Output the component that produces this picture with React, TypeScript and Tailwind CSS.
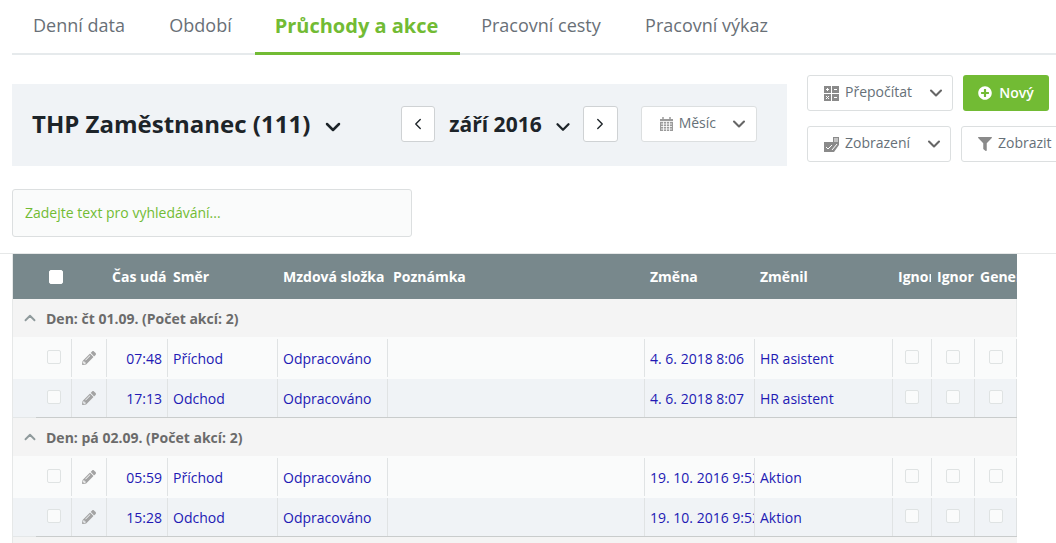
import { ChevronDown, ChevronLeft, ChevronRight, ChevronUp } from 'lucide-react';
import { FaFilter, FaPencilAlt, FaPlusCircle } from 'react-icons/fa';

const tabs = [
  { label: 'Denní data', width: 'w-[134px]' },
  { label: 'Období', width: 'w-[109px]' },
  { label: 'Průchody a akce', width: 'w-[205px] pr-[2px]', active: true },
  { label: 'Pracovní cesty', width: 'w-[162px]' },
  { label: 'Pracovní výkaz', width: 'w-[169px]' },
];

// column widths of the table, left to right
const cols = {
  check: 'w-[58px]',
  edit: 'w-[35px]',
  time: 'w-[61px]',
  dir: 'w-[110px]',
  type: 'w-[110px]',
  note: 'w-[257px]',
  changed: 'w-[110px]',
  by: 'w-[138px]',
  ign1: 'w-[39px]',
  ign2: 'w-[43px]',
  gen: 'w-[43px]',
};

const groups = [
  {
    title: 'Den: čt 01.09. (Počet akcí: 2)',
    rows: [
      { time: '07:48', dir: 'Příchod', changed: '4. 6. 2018 8:06', by: 'HR asistent' },
      { time: '17:13', dir: 'Odchod', changed: '4. 6. 2018 8:07', by: 'HR asistent' },
    ],
  },
  {
    title: 'Den: pá 02.09. (Počet akcí: 2)',
    rows: [
      { time: '05:59', dir: 'Příchod', changed: '19. 10. 2016 9:52', by: 'Aktion' },
      { time: '15:28', dir: 'Odchod', changed: '19. 10. 2016 9:52', by: 'Aktion' },
    ],
  },
];

function CalcIcon() {
  return (
    <svg width="15" height="15" viewBox="0 0 15 15" className="shrink-0 mr-px">
      <rect width="7" height="7" fill="#8a8a8a" />
      <rect x="8" width="7" height="7" fill="#8a8a8a" />
      <rect y="8" width="7" height="7" fill="#8a8a8a" />
      <rect x="8" y="8" width="7" height="7" fill="#8a8a8a" />
      <path d="M2 3.5h3M3.5 2v3M10 3.5h3M2 10l3 3M5 10l-3 3M10 11.5h3" stroke="#fff" strokeWidth="1" />
    </svg>
  );
}

function ViewIcon() {
  return (
    <svg width="16" height="15" viewBox="0 0 16 15" className="shrink-0">
      <path d="M0 5h9V0h6v8l-5 7H0z" fill="#8a8a8a" />
      <path d="M10 2h4M10 4h4M2 10l2 2 4-4M8 13l5-6" stroke="#fff" strokeWidth="1" fill="none" />
    </svg>
  );
}

function CalendarIcon() {
  return (
    <svg width="13" height="14" viewBox="0 0 13 14" className="shrink-0">
      <path d="M0 2h13v12H0z" fill="#9a9a9a" />
      <path d="M3 0v3M10 0v3" stroke="#9a9a9a" strokeWidth="1.5" />
      <path d="M0 4.5h13M1 7h11M1 9.5h11M1 12h11M3.5 4.5V14M6.5 4.5V14M9.5 4.5V14" stroke="#fff" strokeWidth="0.8" />
    </svg>
  );
}

function Check({ dim = true }: { dim?: boolean }) {
  return <span className={`block w-[14px] h-[14px] rounded-[2px] border ${dim ? 'border-[#dfe3e3] bg-[#fafbfb]' : 'border-white bg-white'}`} />;
}

function ToolButton({ width, icon, label }: { width: string; icon: React.ReactNode; label: string }) {
  return (
    <button className={`${width} h-[36px] shrink-0 flex items-center pl-[16px] bg-white border border-[#dcdfe0] rounded-[3px] text-[14px] text-[#667078]`}>
      {icon}
      <span className="ml-[5px] mb-[3px] whitespace-nowrap">{label}</span>
      <ChevronDown className="ml-auto mr-[6px] text-[#666]" size={20} strokeWidth={2.5} />
    </button>
  );
}

function Cell({ width, className = '', children }: { width: string; className?: string; children?: React.ReactNode }) {
  return <div className={`${width} shrink-0 overflow-hidden whitespace-nowrap ${className}`}>{children}</div>;
}

export default function App() {
  return (
    <div className="w-[1056px] h-[543px] overflow-hidden bg-white font-['Open_Sans',sans-serif]">
      {/* Tabs */}
      <div className="ml-[12px] h-[55px] flex border-b-2 border-[#e6eaec]">
        {tabs.map((tab) => (
          <div
            key={tab.label}
            className={`${tab.width} h-[55px] -mb-[2px] pt-[12px] text-center leading-[27px] border-b-[3px] whitespace-nowrap ${
              tab.active ? 'text-[20px] font-bold text-[#72bb34] border-[#72bb34]' : 'text-[18px] text-[#697077] border-transparent'
            }`}
          >
            {tab.label}
          </div>
        ))}
      </div>

      {/* Toolbar */}
      <div className="ml-[12px] mt-[20px] flex w-[1100px]">
        <div className="w-[775px] h-[82px] shrink-0 mt-[9px] bg-[#f0f3f6] flex items-center pl-[20px] text-[#1d2429]">
          <span className="text-[24px] font-bold whitespace-nowrap leading-[30px] mb-[2px]">THP Zaměstnanec (111)</span>
          <ChevronDown className="ml-[11px] mt-[3px]" size={24} strokeWidth={2.5} />
          <button className="ml-[56px] mb-[2px] w-[34px] h-[36px] flex items-center justify-center bg-white border border-[#cfd2d4] rounded-[3px]">
            <ChevronLeft size={18} strokeWidth={1.8} />
          </button>
          <span className="ml-[14px] text-[21px] font-bold whitespace-nowrap leading-[30px] mb-[2px]">září 2016</span>
          <ChevronDown className="ml-[10px] mt-[3px]" size={22} strokeWidth={2.5} />
          <button className="ml-[9px] mb-[2px] w-[35px] h-[36px] flex items-center justify-center bg-white border border-[#cfd2d4] rounded-[3px]">
            <ChevronRight size={18} strokeWidth={1.8} />
          </button>
          <button className="ml-[23px] mb-[2px] w-[116px] h-[36px] flex items-center pl-[18px] bg-white border border-[#dcdfe0] rounded-[3px] text-[14px] text-[#667078]">
            <CalendarIcon />
            <span className="ml-[6px] mb-[3px]">Měsíc</span>
            <ChevronDown className="ml-auto mr-[7px] text-[#666]" size={20} strokeWidth={2.5} />
          </button>
        </div>
        <div className="ml-[20px] shrink-0 flex flex-col gap-[15px]">
          <div className="flex gap-[10px]">
            <ToolButton width="w-[146px]" icon={<CalcIcon />} label="Přepočítat" />
            <button className="w-[86px] h-[36px] flex items-center justify-center bg-[#72bb34] rounded-[3px] text-white text-[14px] font-semibold">
              <FaPlusCircle size={14} />
              <span className="ml-[7px] mb-[2px]">Nový</span>
            </button>
          </div>
          <div className="flex gap-[10px]">
            <ToolButton width="w-[144px]" icon={<ViewIcon />} label="Zobrazení" />
            <button className="w-[120px] h-[36px] shrink-0 flex items-center pl-[16px] bg-white border border-[#dcdfe0] rounded-[3px] text-[14px] text-[#667078]">
              <FaFilter size={14} className="text-[#8a8a8a]" />
              <span className="ml-[6px] mb-[3px]">Zobrazit</span>
            </button>
          </div>
        </div>
      </div>

      {/* Search */}
      <div className="ml-[12px] mt-[23px] w-[400px] h-[48px] flex items-center pl-[12px] pb-[2px] bg-[#fafbfb] border border-[#dcdfe0] rounded-[3px] text-[14px] text-[#72bb34]">
        Zadejte text pro vyhledávání...
      </div>

      {/* Table */}
      <div className="mt-[16px] border-t border-[#e6e8e8]">
        <div className="ml-[12px] w-[1005px] border-l border-[#e6e8e8]">
          <div className="h-[45px] flex items-center bg-[#78888c] text-white text-[14px] font-bold">
            <Cell width={cols.check} className="pl-[36px]">
              <Check dim={false} />
            </Cell>
            <Cell width={cols.edit} />
            <Cell width={cols.time} className="pl-[6px]">Čas události</Cell>
            <Cell width={cols.dir} className="pl-[6px]">Směr</Cell>
            <Cell width={cols.type} className="pl-[6px]">Mzdová složka</Cell>
            <Cell width={cols.note} className="pl-[6px]">Poznámka</Cell>
            <Cell width={cols.changed} className="pl-[6px]">Změna</Cell>
            <Cell width={cols.by} className="pl-[6px]">Změnil</Cell>
            <Cell width={cols.ign1} className="pl-[6px]">Ignorovat</Cell>
            <Cell width={cols.ign2} className="pl-[6px]">Ignorovat</Cell>
            <Cell width={cols.gen} className="pl-[6px]">Generováno</Cell>
          </div>
          {groups.map((group) => (
            <div key={group.title}>
              <div className="h-[38px] flex items-center bg-[#f4f4f4] border-r border-[#e6e8e8] text-[14px] font-bold text-[#6b6b6b]">
                <ChevronUp className="ml-[8px] text-[#8f9a9c]" size={18} strokeWidth={2.5} />
                <span className="ml-[7px]">{group.title}</span>
              </div>
              {group.rows.map((row, i) => (
                <div
                  key={row.time}
                  className={`flex text-[14px] leading-[19px] text-[#2219b4] ${
                    i === 0 ? 'h-[42px] py-[2px] bg-[#fafbfb]' : 'h-[38px] bg-[#f0f3f6]'
                  }`}
                >
                  <Cell width={cols.check} className="pl-[34px] pt-[11px]">
                    <Check />
                  </Cell>
                  <Cell width={cols.edit} className="pl-[10px] pt-[12px] border-l border-[#e0e3e4]">
                    <FaPencilAlt size={14} className="text-[#a3a3a3]" />
                  </Cell>
                  <Cell width={cols.time} className="pr-[5px] pt-[10px] text-right border-l border-[#e0e3e4]">{row.time}</Cell>
                  <Cell width={cols.dir} className="pl-[5px] pt-[10px] border-l border-[#e0e3e4]">{row.dir}</Cell>
                  <Cell width={cols.type} className="pl-[5px] pt-[10px] border-l border-[#e0e3e4]">Odpracováno</Cell>
                  <Cell width={cols.note} className="border-l border-[#e0e3e4]" />
                  <Cell width={cols.changed} className="pl-[5px] pt-[10px] border-l border-[#e0e3e4]">{row.changed}</Cell>
                  <Cell width={cols.by} className="pl-[5px] pt-[10px] border-l border-[#e0e3e4]">{row.by}</Cell>
                  <Cell width={cols.ign1} className="pl-[12px] pt-[11px] border-l border-[#e0e3e4]">
                    <Check />
                  </Cell>
                  <Cell width={cols.ign2} className="pl-[14px] pt-[11px] border-l border-[#e0e3e4]">
                    <Check />
                  </Cell>
                  <Cell width={cols.gen} className="pl-[14px] pt-[11px] border-x border-[#e0e3e4]">
                    <Check />
                  </Cell>
                </div>
              ))}
              <div className="h-px bg-[#e4e7e8]">
                <div className="ml-[23px] h-px bg-[#c9cccc]" />
              </div>
            </div>
          ))}
          <div className="h-[20px] bg-[#f4f4f4]" />
        </div>
      </div>
    </div>
  );
}
